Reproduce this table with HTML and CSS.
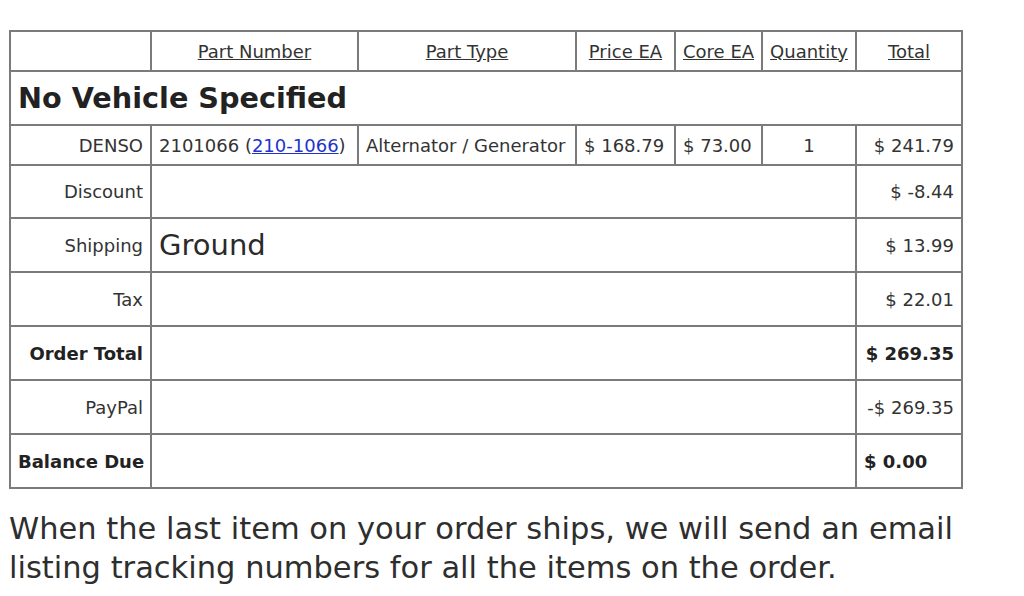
FILE: index.html
```html
<!DOCTYPE html>
<html>
<head>
<meta charset="utf-8">
<link rel="stylesheet" href="styles.css">
</head>
<body>
<table class="order">
  <colgroup>
    <col class="c1"><col class="c2"><col class="c3"><col class="c4"><col class="c5"><col class="c6"><col class="c7">
  </colgroup>
  <tr class="head">
    <td></td>
    <td class="ctr"><a class="hl" href="#">Part Number</a></td>
    <td class="ctr"><a class="hl" href="#">Part Type</a></td>
    <td class="ctr"><a class="hl" href="#">Price EA</a></td>
    <td class="ctr"><a class="hl" href="#">Core EA</a></td>
    <td class="ctr"><a class="hl" href="#">Quantity</a></td>
    <td class="ctr"><a class="hl" href="#">Total</a></td>
  </tr>
  <tr class="veh">
    <td colspan="7" class="vehicle">No Vehicle Specified</td>
  </tr>
  <tr class="item">
    <td class="r">DENSO</td>
    <td>2101066 (<a class="pn" href="#">210-1066</a>)</td>
    <td>Alternator / Generator</td>
    <td>$ 168.79</td>
    <td>$ 73.00</td>
    <td class="ctr">1</td>
    <td class="r">$ 241.79</td>
  </tr>
  <tr class="sum first">
    <td class="r">Discount</td>
    <td colspan="5"></td>
    <td class="r">$ -8.44</td>
  </tr>
  <tr class="sum">
    <td class="r">Shipping</td>
    <td colspan="5" class="ship">Ground</td>
    <td class="r">$ 13.99</td>
  </tr>
  <tr class="sum">
    <td class="r">Tax</td>
    <td colspan="5"></td>
    <td class="r">$ 22.01</td>
  </tr>
  <tr class="sum">
    <td class="r b">Order Total</td>
    <td colspan="5"></td>
    <td class="r b">$ 269.35</td>
  </tr>
  <tr class="sum">
    <td class="r">PayPal</td>
    <td colspan="5"></td>
    <td class="r">-$ 269.35</td>
  </tr>
  <tr class="sum">
    <td class="r b">Balance Due</td>
    <td colspan="5"></td>
    <td class="b">$ 0.00</td>
  </tr>
</table>
<p class="note">When the last item on your order ships, we will send an email listing tracking numbers for all the items on the order.</p>
</body>
</html>
```

FILE: styles.css
```css
html, body {
  margin: 0;
  padding: 0;
  background: #ffffff;
}
body {
  padding: 30px 0 0 9px;
  font-family: "DejaVu Sans", Verdana, sans-serif;
  color: #333333;
}
.order {
  border-collapse: collapse;
  table-layout: fixed;
  width: 952px;
  font-size: 18px;
}
.c1 { width: 141px; }
.c2 { width: 207px; }
.c3 { width: 218px; }
.c4 { width: 99px; }
.c5 { width: 87px; }
.c6 { width: 94px; }
.c7 { width: 106px; }
.order td {
  border: 2px solid #7b7b7b;
  padding: 0 7px;
  white-space: nowrap;
  vertical-align: middle;
}
.head td { height: 38px; }
.veh td { height: 52px; }
.item td { height: 38px; }
.sum td { height: 52px; }
.sum.first td { height: 51px; }
.ctr { text-align: center; }
.r { text-align: right; }
.b { font-weight: bold; color: #222222; }
.hl {
  color: #333333;
  text-decoration: underline;
}
.pn {
  color: #2233cc;
  text-decoration: underline;
}
.vehicle {
  font-size: 28.7px;
  font-weight: bold;
  color: #222222;
}
.ship {
  font-size: 29px;
  color: #2a2a2a;
}
.note {
  margin: 20px 0 0 0;
  width: 960px;
  font-size: 30.5px;
  line-height: 39px;
  color: #2e2e2e;
}
```
